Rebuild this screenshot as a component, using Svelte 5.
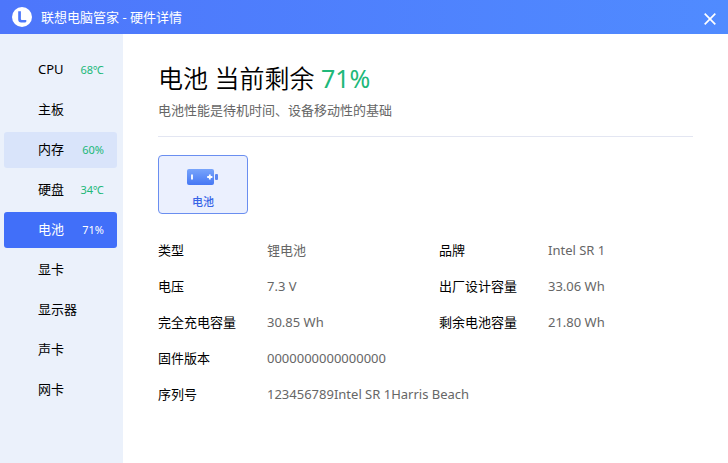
<script>
  const items = [
    { name: 'CPU', value: '68℃' },
    { name: '主板' },
    { name: '内存', value: '60%', hover: true },
    { name: '硬盘', value: '34℃' },
    { name: '电池', value: '71%' },
    { name: '显卡' },
    { name: '显示器' },
    { name: '声卡' },
    { name: '网卡' }
  ];
  let current = $state('电池');

  const left = [
    ['类型', '锂电池'],
    ['电压', '7.3 V'],
    ['完全充电容量', '30.85 Wh'],
    ['固件版本', '0000000000000000'],
    ['序列号', '123456789Intel SR 1Harris Beach']
  ];
  const right = [
    ['品牌', 'Intel SR 1'],
    ['出厂设计容量', '33.06 Wh'],
    ['剩余电池容量', '21.80 Wh']
  ];
</script>

<div class="window">
  <header>
    <svg class="logo" viewBox="0 0 20 20" aria-hidden="true">
      <circle cx="10" cy="10" r="10" fill="#fff" />
      <path d="M6.200 4.200h2.700v7.600c0 .9.400 1.300 1.300 1.300h4.100v1.200c0 .7-.4 1.100-1.100 1.100H9.200c-1.900 0-3-1.100-3-3z" fill="#4d78fb" />
    </svg>
    <span class="title">联想电脑管家 - 硬件详情</span>
    <button class="close" aria-label="关闭">
      <svg viewBox="0 0 12 12" aria-hidden="true">
        <path d="M.7.7l10.600 10.600M11.300.7L.7 11.300" stroke="#fff" stroke-width="1.700" />
      </svg>
    </button>
  </header>

  <div class="body">
    <nav>
      {#each items as item}
        <button
          class="item"
          class:hover={item.hover}
          class:active={item.name === current}
          onclick={() => (current = item.name)}
        >
          <span class="name">{item.name}</span>
          {#if item.value}<span class="value">{item.value}</span>{/if}
        </button>
      {/each}
    </nav>

    <main>
      <h1>电池 当前剩余 <span class="percent">71%</span></h1>
      <p>电池性能是待机时间、设备移动性的基础</p>
      <hr />
      <button class="card">
        <svg viewBox="0 0 32 16" aria-hidden="true">
          <defs>
            <linearGradient id="cell" x1="0" y1="0" x2="0" y2="1">
              <stop offset="0" stop-color="#78a4fb" />
              <stop offset="1" stop-color="#4678f4" />
            </linearGradient>
          </defs>
          <rect width="27" height="16" rx="2" fill="url(#cell)" />
          <rect x="28" y="5" width="3" height="6" rx="1" fill="#5c86f0" />
          <path d="M5 5.500v5M20.200 8h5.200M22.800 5.400v5.200" stroke="#fff" stroke-width="1.800" />
        </svg>
        <span>电池</span>
      </button>
      <div class="details">
        {#each [left, right] as column}
          <dl>
            {#each column as [label, value]}
              <div class="row">
                <dt>{label}</dt>
                <dd>{value}</dd>
              </div>
            {/each}
          </dl>
        {/each}
      </div>
    </main>
  </div>
</div>

<style>
  .window {
    display: flex;
    flex-direction: column;
    min-height: 100vh;
    background: #fff;
    color: #000;
    font: 13px/20px 'Noto Sans', 'Noto Sans CJK SC', sans-serif;
  }
  button {
    border: 0;
    padding: 0;
    background: none;
    color: inherit;
    font: inherit;
    cursor: pointer;
  }
  header {
    display: flex;
    align-items: center;
    height: 34px;
    padding: 0 12px;
    background: linear-gradient(90deg, #4d76fb, #508bff);
    color: #fff;
  }
  .logo {
    width: 20px;
    height: 20px;
    margin-right: 9px;
  }
  .close {
    display: flex;
    margin-left: auto;
    margin-top: 4px;
  }
  .close svg {
    width: 12px;
    height: 12px;
  }
  .body {
    display: flex;
    flex: 1;
  }
  nav {
    display: flex;
    flex-direction: column;
    flex: none;
    box-sizing: border-box;
    gap: 4px;
    width: 123px;
    padding: 18px 6px 18px 4px;
    background: #ebf1fb;
  }
  .item {
    display: flex;
    align-items: center;
    justify-content: space-between;
    box-sizing: border-box;
    height: 36px;
    padding: 0 13px 2px 34px;
    border-radius: 3px;
  }
  .value {
    padding-top: 2px;
    color: #20b879;
    font-size: 11px;
  }
  .hover {
    background: #d9e4fa;
  }
  .active,
  .active .value {
    background: #416ff9;
    color: #fff;
  }
  main {
    flex: 1;
    padding: 24px 35px;
  }
  h1 {
    margin: 0;
    font-size: 25px;
    line-height: 40px;
    font-weight: 350;
  }
  .percent {
    color: #20b879;
    font-weight: 400;
  }
  p {
    margin: 2px 0 16px;
    color: #666;
  }
  hr {
    margin: 0 0 18px;
    border: 0;
    border-top: 1px solid #e3e6f2;
  }
  .card {
    display: flex;
    flex-direction: column;
    align-items: center;
    box-sizing: border-box;
    width: 90px;
    height: 59px;
    padding-top: 13px;
    border: 1px solid #6a8ef0;
    border-radius: 4px;
    background: #ebf0fe;
    color: #3764e6;
    font-size: 11px;
    font-weight: 500;
  }
  .card svg {
    width: 32px;
    height: 16px;
    margin-bottom: 7px;
  }
  .details {
    display: grid;
    grid-template-columns: 281px 1fr;
    margin-top: 26px;
  }
  dl {
    display: flex;
    flex-direction: column;
    gap: 16px;
    margin: 0;
  }
  .row {
    display: flex;
  }
  dt {
    flex: none;
    width: 109px;
  }
  dd {
    margin: 0;
    color: #666;
    white-space: nowrap;
  }
</style>
